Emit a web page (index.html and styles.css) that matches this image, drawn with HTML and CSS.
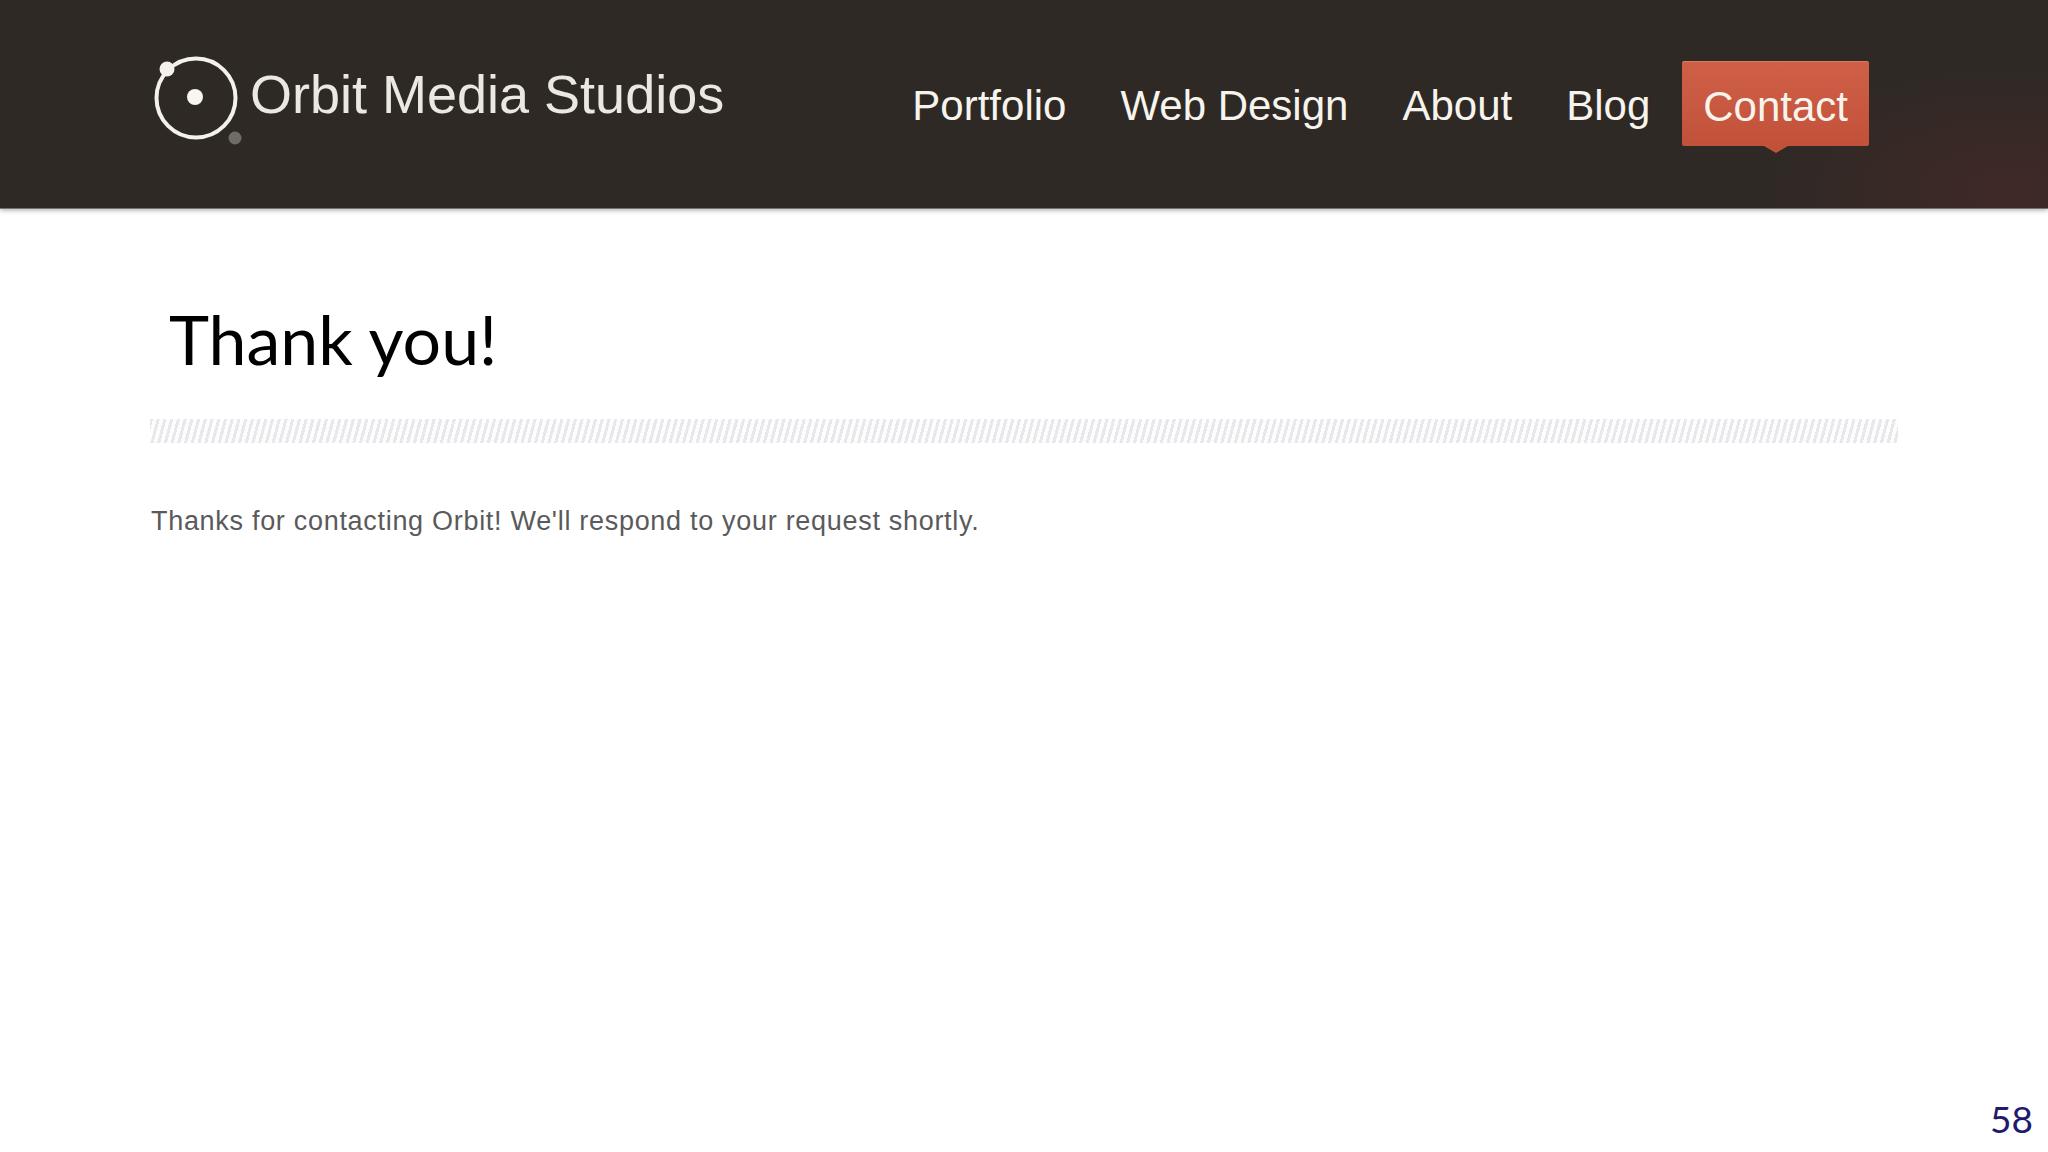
FILE: index.html
```html
<!DOCTYPE html>
<html lang="en">
  <head>
    <meta charset="UTF-8" />
    <meta name="viewport" content="width=device-width, initial-scale=1.0" />
    <title>Thank you</title>
    <link rel="stylesheet" href="styles.css">
  </head>
  <body>
    <header class="site-header">
      <div class="logo">
        <svg class="logo-mark" width="92" height="90" viewBox="0 0 92 90">
          <circle cx="44" cy="43" r="39.5" fill="none" stroke="#f4f1ea" stroke-width="4" />
          <circle cx="15" cy="14" r="7.5" fill="#f4f1ea" />
          <circle cx="43" cy="42" r="8" fill="#f8f6f0" />
          <circle cx="83" cy="83" r="6.5" fill="#6f6b66" />
        </svg>
        <span class="logo-text">Orbit Media Studios</span>
      </div>
      <nav class="main-nav">
        <a class="nav-link">Portfolio</a>
        <a class="nav-link">Web Design</a>
        <a class="nav-link">About</a>
        <a class="nav-link">Blog</a>
        <a class="nav-link nav-contact">Contact</a>
      </nav>
    </header>

    <main class="content">
      <h1 class="page-title">Thank you!</h1>
      <div class="divider"></div>
      <p class="message">Thanks for contacting Orbit! We'll respond to your request shortly.</p>
    </main>

    <div class="slide-number">58</div>
  </body>
</html>
```

FILE: styles.css
```css
html,
body {
  margin: 0;
  height: 100%;
}

body {
  width: 2048px;
  height: 1152px;
  overflow: hidden;
  position: relative;
  background: #fff;
  font-family: "Liberation Sans", sans-serif;
}

.site-header {
  height: 209px;
  box-sizing: border-box;
  padding: 55px 179px 0 152px;
  display: flex;
  justify-content: space-between;
  align-items: flex-start;
  background:
    radial-gradient(ellipse 260px 130px at 2010px 190px, rgba(90, 40, 40, 0.4), rgba(90, 40, 40, 0)),
    #2e2925;
  border-bottom: 1px solid #77736f;
  box-shadow: 0 2px 4px rgba(0, 0, 0, 0.25);
}

.logo {
  display: flex;
  align-items: flex-start;
  gap: 6px;
}

.logo-mark {
  display: block;
  flex: none;
}

.logo-text {
  margin-top: 8px;
  color: #ebe8e1;
  font-family: "Liberation Sans Narrow", "Liberation Sans", sans-serif;
  font-size: 54px;
  line-height: 62px;
  white-space: nowrap;
}

.main-nav {
  display: flex;
  align-items: flex-start;
  margin-top: 6px;
}

.nav-link {
  display: block;
  height: 85px;
  margin-left: 54px;
  color: #f7f4ee;
  font-family: "Liberation Sans Narrow", "Liberation Sans", sans-serif;
  font-size: 42px;
  line-height: 90px;
  white-space: nowrap;
}

.nav-contact {
  position: relative;
  margin-left: 32px;
  padding: 0 21px;
  background: linear-gradient(#cf6046, #c2513a);
  border-top: 1px solid #d97a62;
  border-radius: 2px;
  box-sizing: border-box;
}

.nav-contact::after {
  content: "";
  position: absolute;
  left: 50%;
  bottom: -7px;
  margin-left: -12px;
  border-left: 12px solid transparent;
  border-right: 12px solid transparent;
  border-top: 7px solid #c2513a;
}

.content {
  padding: 0 150px;
}

.page-title {
  margin: 85px 0 0 19px;
  color: #000;
  font-family: Lato, sans-serif;
  font-size: 68px;
  font-weight: 400;
  line-height: 90px;
}

.divider {
  height: 24px;
  margin-top: 35px;
  background: repeating-linear-gradient(105deg, #e9e7ec 0, #e9e7ec 3px, #fdfdfd 3px, #fdfdfd 6.5px);
}

.message {
  margin: 60px 0 0 1px;
  color: #5a5a5c;
  font-size: 27px;
  line-height: 36px;
  letter-spacing: 0.7px;
  white-space: nowrap;
}

.slide-number {
  position: absolute;
  right: 15px;
  bottom: 11px;
  color: #1f1a6e;
  font-family: Lato, sans-serif;
  font-size: 37px;
  line-height: 44px;
}
```
